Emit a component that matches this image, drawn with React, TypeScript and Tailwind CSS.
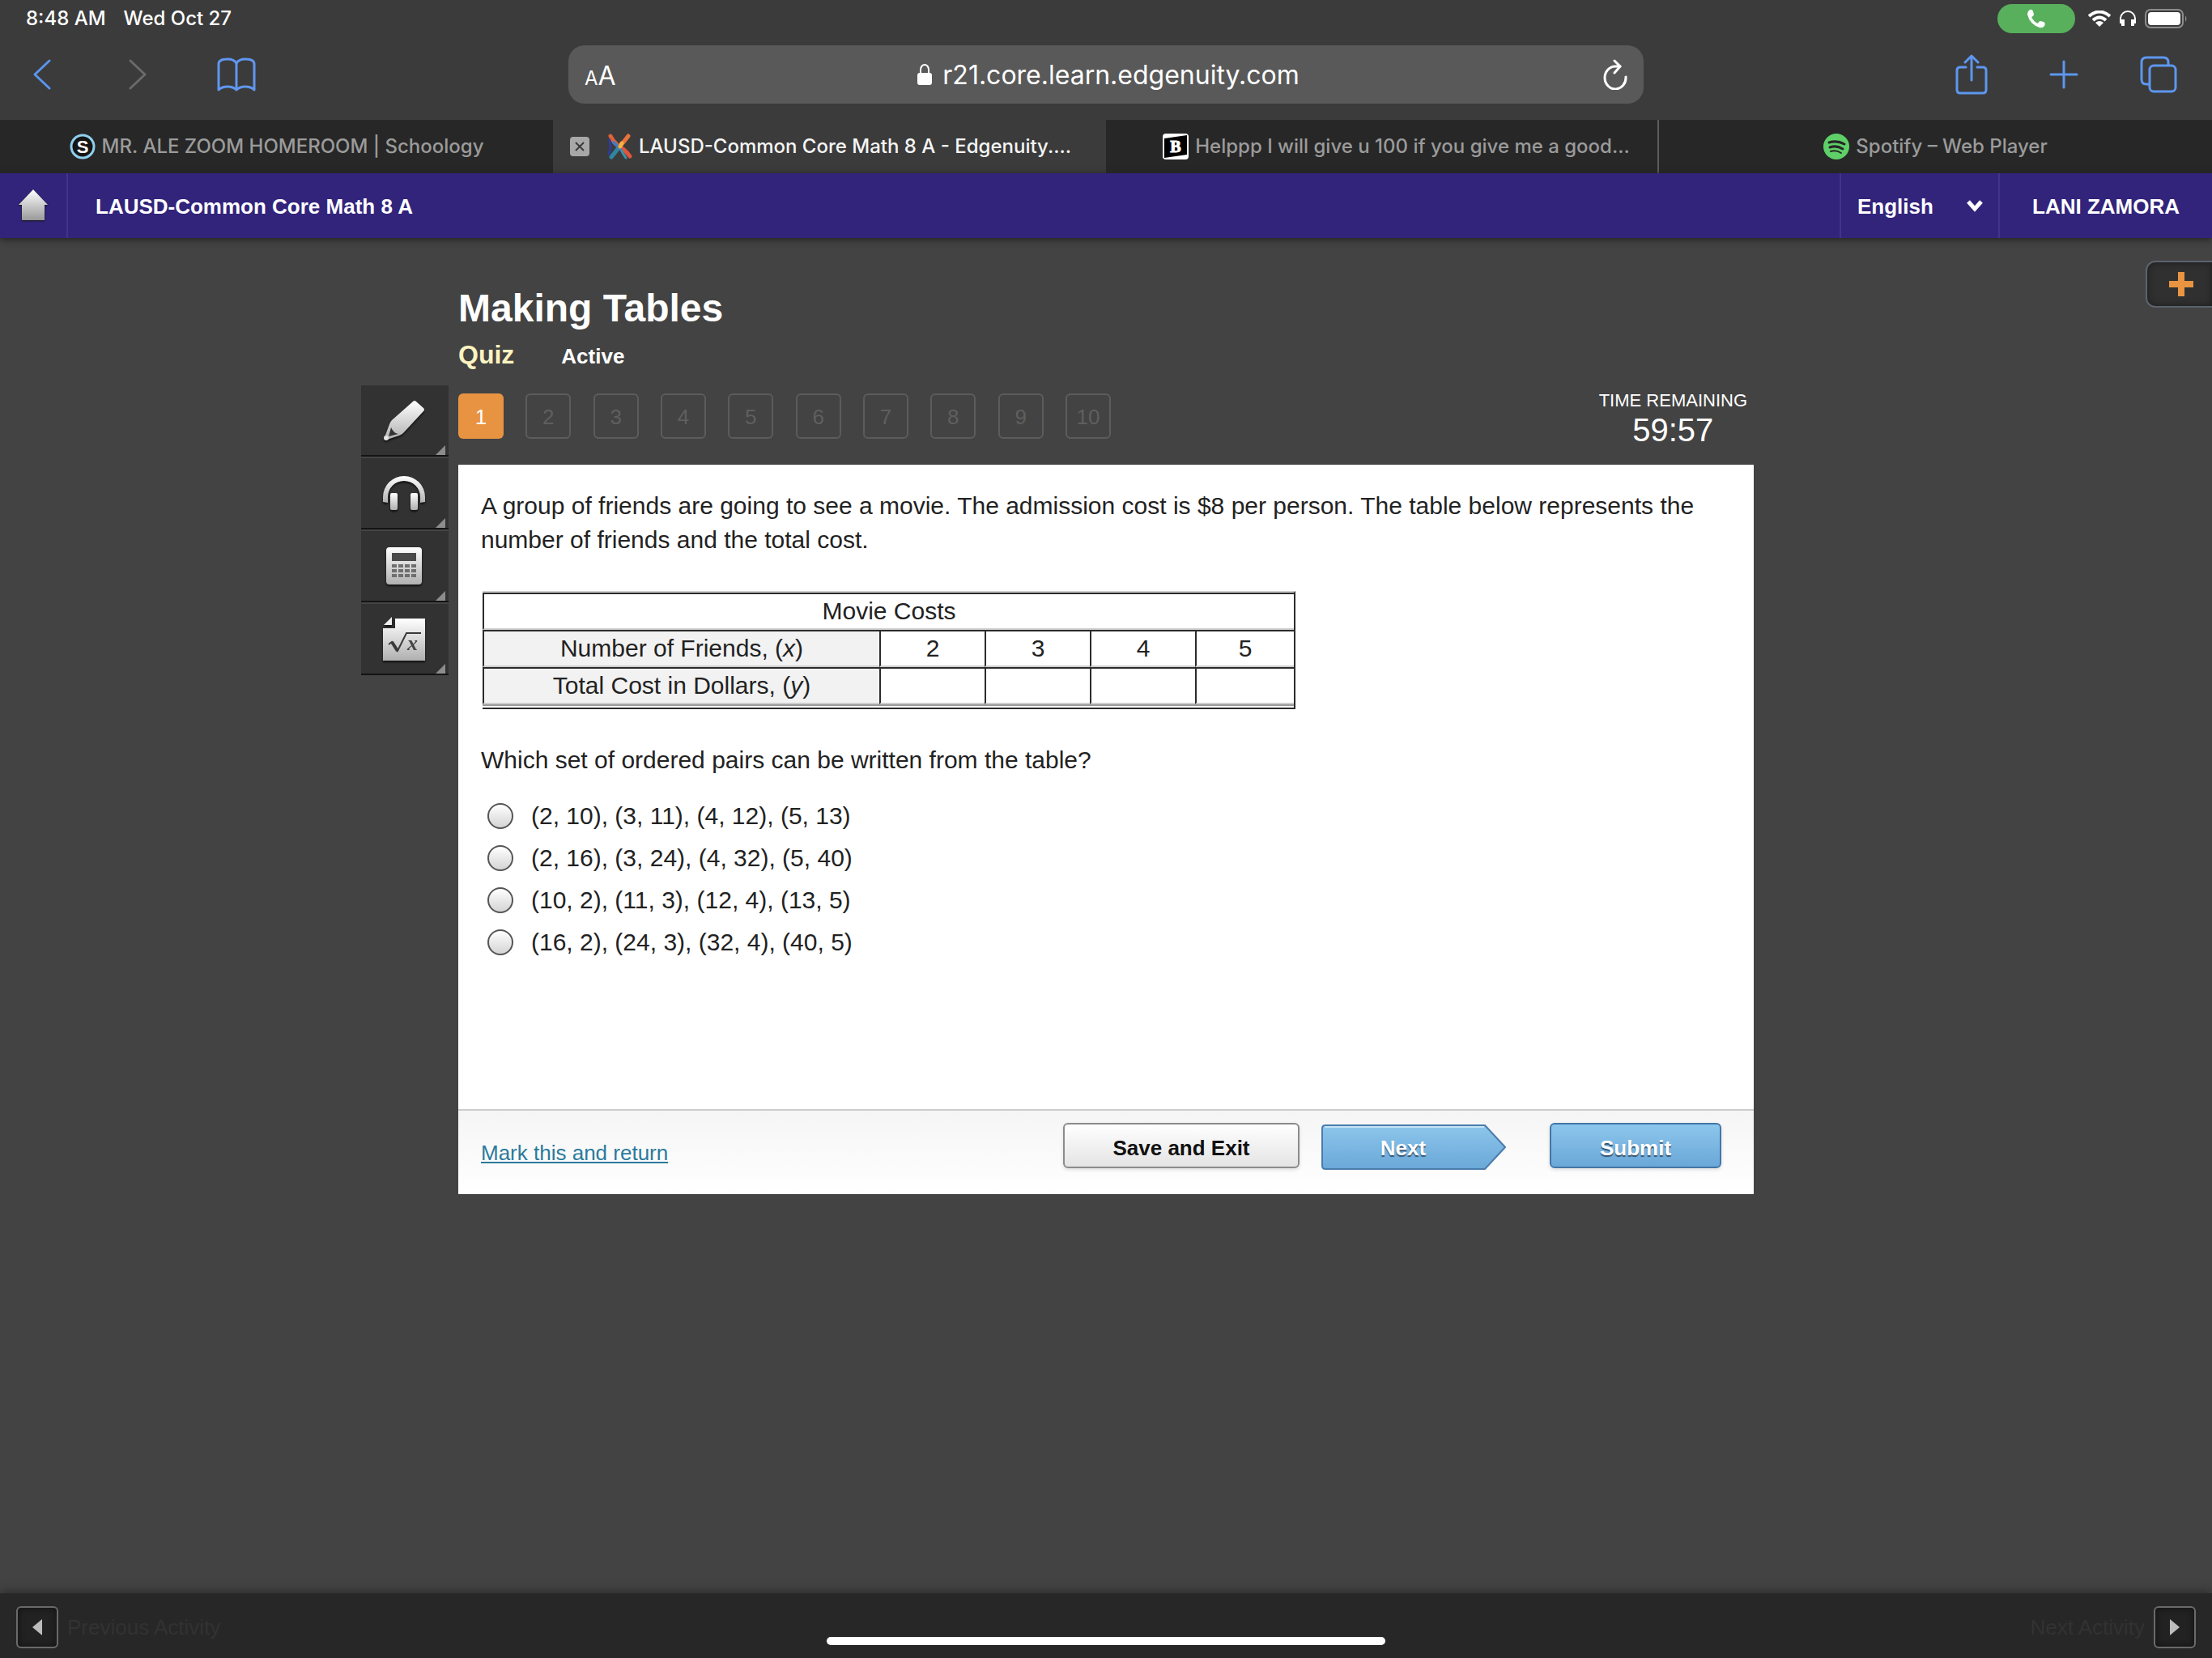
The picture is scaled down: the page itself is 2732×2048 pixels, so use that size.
import React from 'react';

const questions = [1, 2, 3, 4, 5, 6, 7, 8, 9, 10];

const answers = [
  '(2, 10), (3, 11), (4, 12), (5, 13)',
  '(2, 16), (3, 24), (4, 32), (5, 40)',
  '(10, 2), (11, 3), (12, 4), (13, 5)',
  '(16, 2), (24, 3), (32, 4), (40, 5)',
];

const tools = [
  { label: 'Highlighter', icon: <PencilIcon /> },
  { label: 'Read aloud', icon: <HeadsetIcon /> },
  { label: 'Calculator', icon: <CalculatorIcon /> },
  { label: 'Formulas', icon: <FormulaIcon /> },
];

function SilverGradient({ id }: { id: string }) {
  return (
    <linearGradient id={id} x1="0" y1="0" x2="0" y2="1">
      <stop offset="0" stopColor="#ffffff" />
      <stop offset="1" stopColor="#b0b0b0" />
    </linearGradient>
  );
}

function PencilIcon() {
  return (
    <svg className="w-[52px] h-[52px] drop-shadow-[0_2px_1px_#111]" viewBox="0 0 52 52">
      <defs><SilverGradient id="pencil" /></defs>
      <path d="M37 3 Q39 1 41 3 L50 11 Q52 13 50 15 L25 42 Q23 44 20 45 L5 50 Q1 51 2 47 L8 31 Q9 28 11 26 Z" fill="url(#pencil)" />
      <path d="M10 35 Q13 42 19 43 L7 46 Z" fill="#333" />
      <circle cx="4" cy="48" r="3" fill="#e4e4e4" />
    </svg>
  );
}

function HeadsetIcon() {
  return (
    <svg className="w-[52px] h-[44px] drop-shadow-[0_2px_1px_#111]" viewBox="0 0 52 44">
      <defs><SilverGradient id="headset" /></defs>
      <path d="M0 33 V27 A26 26 0 0 1 52 27 V33 L46 34 V27 A20 20 0 0 0 6 27 V34 Z" fill="url(#headset)" />
      <rect x="9" y="22" width="9" height="21" rx="2" fill="url(#headset)" />
      <rect x="34" y="22" width="9" height="21" rx="2" fill="url(#headset)" />
    </svg>
  );
}

function CalculatorIcon() {
  return (
    <svg className="w-[44px] h-[46px] drop-shadow-[0_2px_1px_#111]" viewBox="0 0 44 46">
      <defs><SilverGradient id="calc" /></defs>
      <rect width="44" height="46" rx="4" fill="url(#calc)" />
      <rect x="7" y="7" width="30" height="10" fill="#4a4a4a" />
      {[21, 27, 33].map((y) =>
        [7, 15, 23, 31].map((x) => <rect key={`${x}-${y}`} x={x} y={y} width="6" height="4" fill="#6f6f6f" />)
      )}
    </svg>
  );
}

function FormulaIcon() {
  return (
    <svg className="w-[52px] h-[54px] drop-shadow-[0_2px_1px_#111]" viewBox="0 0 52 54">
      <defs><SilverGradient id="formula" /></defs>
      <path d="M15 2 H52 V54 H0 V14 H15 Z" fill="url(#formula)" />
      <path d="M11 0 V10 H1 Z" fill="#eee" />
      <path d="M7 34 L11 31 L18 42 L29 20 H47" fill="none" stroke="#3a3a3a" strokeWidth="2" />
      <path d="M11 31 L18 42" stroke="#3a3a3a" strokeWidth="4" />
      <text x="30" y="41" fontFamily="Liberation Serif, serif" fontStyle="italic" fontWeight="bold" fontSize="26" fill="#444">x</text>
    </svg>
  );
}

function StatusBar() {
  return (
    <div className="flex items-center justify-between h-[46px] pl-8 pr-[30px] text-white">
      <div className="flex gap-[22px] text-[24px] font-medium">
        <span>8:48 AM</span>
        <span>Wed Oct 27</span>
      </div>
      <div className="flex items-center">
        <div className="flex items-center justify-center w-24 h-9 mr-4 rounded-full bg-[#58b05c]">
          <svg className="w-6 h-6" viewBox="0 0 24 24" fill="#fff">
            <path d="M4 1 Q7 0 8 3 L9 7 Q9 9 6 10 Q8 15 14 18 Q15 15 17 15 L21 16 Q24 18 22 21 Q20 24 16 23 Q4 19 1 7 Q1 3 4 1 Z" />
          </svg>
        </div>
        <svg className="w-7 h-5 mr-[11px]" viewBox="0 0 28 20" fill="none" stroke="#fff" strokeWidth="4">
          <path d="M1 7 Q14 -4 27 7" />
          <path d="M6 12 Q14 5 22 12" />
          <path d="M14 20 L9 15 Q14 11 19 15 Z" fill="#fff" stroke="none" />
        </svg>
        <svg className="w-5 h-5 mr-[11px]" viewBox="0 0 20 20" fill="none" stroke="#fff">
          <path d="M1 16 V10 A9 9 0 0 1 19 10 V16" strokeWidth="2" />
          <path d="M4 11 V19 M16 11 V19" strokeWidth="4" />
        </svg>
        <svg className="w-[53px] h-6" viewBox="0 0 53 24">
          <rect x="1" y="1" width="46" height="22" rx="6" fill="none" stroke="#8d8d8d" strokeWidth="2" />
          <rect x="4" y="4" width="40" height="16" rx="4" fill="#fff" />
          <path d="M50 8 Q53 12 50 16 Z" fill="#8d8d8d" />
        </svg>
      </div>
    </div>
  );
}

function Toolbar() {
  return (
    <div className="grid grid-cols-[1fr_minmax(0,1328px)_1fr] items-start h-[102px] pt-[10px]">
      <div className="flex items-center h-[72px] pl-[41px]">
        <button aria-label="Back" className="mr-24">
          <svg className="w-[22px] h-[38px]" viewBox="0 0 22 38" fill="none" stroke="#5a95ee" strokeWidth="3" strokeLinecap="round" strokeLinejoin="round"><path d="M20 2 L2 19 L20 36" /></svg>
        </button>
        <button aria-label="Forward" className="mr-[87px]">
          <svg className="w-[22px] h-[38px]" viewBox="0 0 22 38" fill="none" stroke="#6a6a6a" strokeWidth="3" strokeLinecap="round" strokeLinejoin="round"><path d="M2 2 L20 19 L2 36" /></svg>
        </button>
        <button aria-label="Bookmarks">
          <svg className="w-12 h-[42px]" viewBox="0 0 48 42" fill="none" stroke="#6097f0" strokeWidth="3" strokeLinejoin="round">
            <path d="M24 7 Q21 2 13 2 Q2 2 2 8 V40 Q6 36 13 36 Q20 36 24 40 Q28 36 35 36 Q42 36 46 40 V8 Q46 2 35 2 Q27 2 24 7 Z" />
            <path d="M24 7 V40" />
          </svg>
        </button>
      </div>
      <div className="flex items-center justify-between h-[72px] px-5 rounded-[20px] bg-[#595959] text-white">
        <button aria-label="Page settings" className="pt-1 leading-none">
          <span className="text-[24px]">A</span><span className="text-[32px]">A</span>
        </button>
        <label className="flex items-center gap-3">
          <svg className="w-5 h-[28px]" viewBox="0 0 20 28" fill="#fff">
            <rect x="1" y="12" width="18" height="15" rx="3" />
            <path d="M5 13 V8 A5 6 0 0 1 15 8 V13" fill="none" stroke="#fff" strokeWidth="2" />
          </svg>
          <input aria-label="Address" type="text" defaultValue="r21.core.learn.edgenuity.com" className="w-[444px] pt-0.5 bg-transparent text-[32px] outline-none" />
        </label>
        <button aria-label="Reload">
          <svg className="w-[30px] h-[38px]" viewBox="0 0 30 38" fill="none" stroke="#fff" strokeWidth="3" strokeLinecap="round" strokeLinejoin="round">
            <path d="M28 22 A13 14 0 1 1 15 9 H21" />
            <path d="M14 2 L21 9 L14 17" />
          </svg>
        </button>
      </div>
      <div className="flex items-center justify-end h-[72px] pr-[43px]">
        <button aria-label="Share" className="mr-[76px]">
          <svg className="w-10 h-[50px]" viewBox="0 0 40 50" fill="none" stroke="#5d97f0" strokeWidth="3" strokeLinecap="round" strokeLinejoin="round">
            <path d="M13 16 H6 Q2 16 2 20 V44 Q2 48 6 48 H34 Q38 48 38 44 V20 Q38 16 34 16 H27" />
            <path d="M20 32 V2 M12 10 L20 2 L28 10" />
          </svg>
        </button>
        <button aria-label="New tab" className="mr-[76px]">
          <svg className="w-9 h-9" viewBox="0 0 36 36" stroke="#5d97f0" strokeWidth="3" strokeLinecap="round"><path d="M18 2 V34 M2 18 H34" /></svg>
        </button>
        <button aria-label="Show tabs">
          <svg className="w-[46px] h-[46px]" viewBox="0 0 46 46" fill="none" stroke="#5d97f0" strokeWidth="3">
            <rect x="12" y="12" width="32" height="32" rx="5" />
            <path d="M12 35 H8 Q2 35 2 29 V8 Q2 2 8 2 H29 Q35 2 35 8 V12" />
          </svg>
        </button>
      </div>
    </div>
  );
}

function BrowserTabs() {
  return (
    <div className="grid grid-cols-4 h-[66px] bg-[#272727] text-[#9b9b9b] text-[24px] font-medium whitespace-nowrap">
      <div className="flex items-center justify-center gap-2">
        <svg className="w-8 h-8 shrink-0" viewBox="0 0 32 32">
          <circle cx="16" cy="16" r="14" fill="#151515" stroke="#8fd0ee" strokeWidth="3" />
          <text x="16" y="24" textAnchor="middle" fontFamily="Liberation Sans, sans-serif" fontWeight="bold" fontSize="22" fill="#fff">S</text>
        </svg>
        <span>MR. ALE ZOOM HOMEROOM | Schoology</span>
      </div>
      <div className="flex items-center pl-[21px] bg-[#3b3b3b] text-[#f5f5f5]">
        <button aria-label="Close tab" className="flex items-center justify-center w-6 h-6 mr-[21px] shrink-0 rounded bg-[#a8a8a8]">
          <svg className="w-3 h-3" viewBox="0 0 12 12" stroke="#3b3b3b" strokeWidth="2"><path d="M1 1 L11 11 M11 1 L1 11" /></svg>
        </button>
        <svg className="w-8 h-8 mr-2 shrink-0" viewBox="0 0 32 32" strokeLinecap="round" fill="none">
          <path d="M5 3 Q8 10 16 16" stroke="#e0623a" strokeWidth="5" />
          <path d="M4 8 Q6 20 3 25" stroke="#2b3c9c" strokeWidth="3" />
          <path d="M27 3 Q22 10 16 16" stroke="#e8733c" strokeWidth="5" />
          <path d="M16 16 Q23 20 29 28" stroke="#e0563c" strokeWidth="5" />
          <path d="M16 16 Q12 22 6 29" stroke="#2f86a0" strokeWidth="5" />
          <path d="M17 18 Q20 24 24 30" stroke="#3a93a8" strokeWidth="3" />
          <path d="M9 11 L17 19" stroke="#4a78b8" strokeWidth="4" />
          <path d="M19 12 L17 16" stroke="#f7b13c" strokeWidth="5" />
        </svg>
        <span>LAUSD-Common Core Math 8 A - Edgenuity....</span>
      </div>
      <div className="flex items-center justify-center gap-2 pl-9 border-r-2 border-[#5c5c5c]">
        <svg className="w-8 h-8 shrink-0" viewBox="0 0 32 32">
          <rect width="32" height="32" rx="4" fill="#fff" />
          <path d="M2 6 L30 2 V26 L2 30 Z" fill="#000" />
          <text x="16" y="23" textAnchor="middle" fontFamily="Liberation Serif, serif" fontWeight="bold" fontSize="20" fill="#fff" stroke="#fff">B</text>
        </svg>
        <span>Helppp I will give u 100 if you give me a good...</span>
      </div>
      <div className="flex items-center justify-center gap-2">
        <svg className="w-8 h-8 shrink-0" viewBox="0 0 32 32" fill="none" stroke="#272727" strokeLinecap="round">
          <circle cx="16" cy="16" r="16" fill="#5fd068" stroke="none" />
          <path d="M7 11 Q17 8 26 13" strokeWidth="3" />
          <path d="M8 17 Q16 14 24 19" strokeWidth="3" />
          <path d="M9 22 Q16 20 22 24" strokeWidth="2" />
        </svg>
        <span>Spotify – Web Player</span>
      </div>
    </div>
  );
}

function CourseHeader() {
  return (
    <header className="relative flex items-stretch h-20 bg-[#32247b] text-white text-[26px] font-bold shadow-[0_2px_8px_#222]">
      <a href="#home" aria-label="Home" className="flex items-center justify-center w-[84px] border-r-2 border-[#40338a]">
        <svg className="w-9 h-10 drop-shadow-[0_1px_1px_#111]" viewBox="0 0 36 40">
          <defs>
            <linearGradient id="house" x1="0" y1="0" x2="0" y2="1">
              <stop offset="0" stopColor="#fff" />
              <stop offset="1" stopColor="#999" />
            </linearGradient>
          </defs>
          <path d="M18 0 L36 19 H32 V38 H4 V19 H0 Z" fill="url(#house)" />
        </svg>
      </a>
      <h2 className="flex items-center pl-[34px] pt-0.5 mr-auto">LAUSD-Common Core Math 8 A</h2>
      <div className="relative flex items-center border-l-2 border-[#40338a]">
        <select aria-label="Language" className="w-[194px] h-20 pl-5 pt-0.5 appearance-none bg-transparent outline-none">
          <option>English</option>
        </select>
        <svg className="absolute right-[19px] w-5 h-4 pointer-events-none" viewBox="0 0 20 16" fill="none" stroke="#fff" strokeWidth="5"><path d="M2 3 L10 12 L18 3" /></svg>
      </div>
      <div className="flex items-center px-10 pt-0.5 border-l-2 border-[#40338a]">LANI ZAMORA</div>
    </header>
  );
}

function CostTable() {
  const cell = 'h-[46px] p-0 border-t-2 border-l-2 border-b-2 border-t-[#2b2b2b] border-l-[#2b2b2b] border-b-[#cfcfcf] font-normal';
  const lastCell = `${cell} shadow-[0_2px_0_#999]`;

  return (
    <table className="w-[1004px] ml-0.5 table-fixed border-separate border-spacing-0 border-t-2 border-r-2 border-b-2 border-t-[#cfcfcf] border-r-[#2b2b2b] border-b-[#2b2b2b] pb-1 text-center leading-[38px]">
      <colgroup>
        <col className="w-[490px]" />
        <col className="w-[130px]" />
        <col className="w-[130px]" />
        <col className="w-[130px]" />
        <col />
      </colgroup>
      <tbody>
        <tr>
          <th colSpan={5} className={cell}>Movie Costs</th>
        </tr>
        <tr>
          <th className={`${cell} bg-[#f2f2f2]`}>Number of Friends, (<i>x</i>)</th>
          <td className={cell}>2</td>
          <td className={cell}>3</td>
          <td className={cell}>4</td>
          <td className={cell}>5</td>
        </tr>
        <tr>
          <th className={`${lastCell} bg-[#f2f2f2]`}>Total Cost in Dollars, (<i>y</i>)</th>
          <td className={lastCell}></td>
          <td className={lastCell}></td>
          <td className={lastCell}></td>
          <td className={lastCell}></td>
        </tr>
      </tbody>
    </table>
  );
}

function QuizCard() {
  return (
    <div className="flex flex-col bg-white text-[#222] text-[30px] leading-[42px]">
      <div className="px-7 pt-[30px] pb-[180px]">
        <p className="mb-[42px]">
          A group of friends are going to see a movie. The admission cost is $8 per person. The table below represents the number of friends and the total cost.
        </p>
        <CostTable />
        <fieldset className="mt-[42px]">
          <legend className="mb-[22px]">Which set of ordered pairs can be written from the table?</legend>
          {answers.map((answer, i) => (
            <label key={answer} htmlFor={`answer-${i}`} className="flex items-center gap-[22px] h-[52px] pl-2">
              <input
                id={`answer-${i}`}
                type="radio"
                name="answer"
                className="w-8 h-8 appearance-none rounded-full border-2 border-[#555] bg-linear-to-b from-white to-[#d4d4d4] checked:to-[#5ba3d9]"
              />
              {answer}
            </label>
          ))}
        </fieldset>
      </div>
      <div className="flex items-start h-[105px] pl-7 pr-10 pt-[15px] border-t-2 border-[#cdcdcd] bg-linear-to-b from-[#f5f5f5] to-white text-[26px] font-bold">
        <a href="#return" className="mt-4 mr-auto font-normal text-[#2c7a9c] underline">Mark this and return</a>
        <button className="w-[292px] h-14 mr-[27px] pt-1.5 rounded-md border-2 border-[#8b8b8b] bg-linear-to-b from-white to-[#e4e4e4] text-[#111] shadow-[0_2px_4px_#ddd]">Save and Exit</button>
        <button className="relative w-[228px] h-14 mr-[54px] mt-[2px] pt-0.5 text-white">
          <svg className="absolute inset-0 w-full h-full" viewBox="0 0 228 56">
            <defs>
              <linearGradient id="next" x1="0" y1="0" x2="0" y2="1">
                <stop offset="0" stopColor="#8dc6ec" />
                <stop offset="1" stopColor="#6aa8d8" />
              </linearGradient>
            </defs>
            <path d="M5 1 H202 L227 28 L202 55 H5 Q1 55 1 51 V5 Q1 1 5 1 Z" fill="url(#next)" stroke="#4a7cab" strokeWidth="2" />
            <path d="M4 3 H201" stroke="#c5e3f7" strokeWidth="2" />
          </svg>
          <span className="relative pr-[26px] [text-shadow:0_2px_1px_#33506b]">Next</span>
        </button>
        <button className="w-[212px] h-14 pt-1.5 rounded-md border-2 border-[#4377a8] bg-linear-to-b from-[#8dc6ec] to-[#6aa8d8] text-white shadow-[0_2px_4px_#ddd] [text-shadow:0_2px_1px_#33506b]">Submit</button>
      </div>
    </div>
  );
}

export default function App() {
  return (
    <div className="flex flex-col min-h-screen bg-[#434343] font-['Liberation_Sans',Arial,sans-serif]">
      <div className="bg-[#3b3b3b] font-['Inter',sans-serif]">
        <StatusBar />
        <Toolbar />
        <BrowserTabs />
      </div>
      <CourseHeader />

      {/* Quiz */}
      <main className="grid grid-cols-[1fr_minmax(0,1600px)_1fr] pb-16">
        <div className="justify-self-end w-[108px] mt-[180px] mr-3">
          {tools.map((tool) => (
            <button
              key={tool.label}
              aria-label={tool.label}
              className="relative flex items-center justify-center w-full h-[90px] pr-0.5 border-t-2 border-b-2 border-t-[#444] border-b-[#141414] bg-[#323232]"
            >
              {tool.icon}
              <svg className="absolute right-1 bottom-0 w-3 h-3" viewBox="0 0 12 12"><path d="M12 0 V12 H0 Z" fill="#8c8c8c" /></svg>
            </button>
          ))}
        </div>
        <div>
          <h1 className="mt-[60px] text-[48px] leading-[54px] font-bold text-white">Making Tables</h1>
          <div className="flex items-baseline gap-[58px] mt-3 leading-[36px] font-bold">
            <span className="text-[32px] text-[#fdf3c0]">Quiz</span>
            <span className="text-[26px] text-white">Active</span>
          </div>
          <div className="flex items-start justify-between h-[116px] pt-7">
            <div className="flex justify-between w-[806px]">
              {questions.map((n) => (
                <button
                  key={n}
                  className={
                    n === 1
                      ? 'w-14 h-14 pt-0.5 rounded-md bg-[#e89342] text-white text-[26px]'
                      : 'w-14 h-14 pt-0.5 rounded-md border-2 border-[#5c5c5c] text-[#5f5f5f] text-[26px]'
                  }
                >
                  {n}
                </button>
              ))}
            </div>
            <div className="pr-2 -mt-1.5 text-center text-white">
              <div className="text-[22px] leading-[30px]">TIME REMAINING</div>
              <div className="text-[40px] leading-[42px]">59:57</div>
            </div>
          </div>
          <QuizCard />
        </div>
        <button aria-label="Expand panel" className="flex items-center justify-center justify-self-end w-[82px] h-[58px] mt-7 pl-1 rounded-l-xl border-2 border-r-0 border-[#5b626e] bg-[#303030] shadow-[inset_0_0_8px_#1c1c1c]">
          <svg className="w-[30px] h-[30px]" viewBox="0 0 30 30" fill="#e89441"><path d="M11 0 H19 V11 H30 V19 H19 V30 H11 V19 H0 V11 H11 Z" /></svg>
        </button>
      </main>

      {/* Activity navigation */}
      <footer className="relative flex items-center justify-between h-20 mt-auto px-5 pt-1 bg-[#272727] text-[#323232] text-[26px] shadow-[0_-2px_12px_#2b2b2b]">
        <button className="flex items-center gap-[11px]">
          <span className="flex items-center justify-center w-[52px] h-[52px] rounded-md border-2 border-[#6a6a6a] bg-[#222] shadow-[inset_0_0_8px_#111]">
            <svg className="w-3 h-5" viewBox="0 0 12 20"><path d="M12 0 V20 L0 10 Z" fill="#bdbdbd" /></svg>
          </span>
          Previous Activity
        </button>
        <button className="flex items-center gap-[11px]">
          Next Activity
          <span className="flex items-center justify-center w-[52px] h-[52px] rounded-md border-2 border-[#6a6a6a] bg-[#222] shadow-[inset_0_0_8px_#111]">
            <svg className="w-3 h-5" viewBox="0 0 12 20"><path d="M0 0 V20 L12 10 Z" fill="#bdbdbd" /></svg>
          </span>
        </button>
        <div className="absolute bottom-4 left-1/2 -translate-x-1/2 w-[690px] h-[10px] rounded-full bg-white" />
      </footer>
    </div>
  );
}
